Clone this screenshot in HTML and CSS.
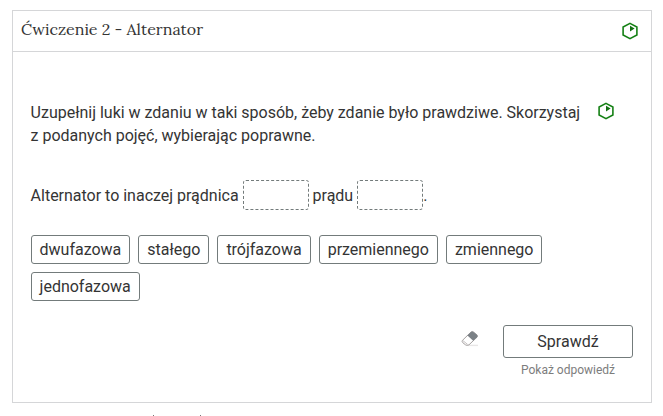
FILE: index.html
```html
<!DOCTYPE html>
<html lang="pl">
<head>
<meta charset="utf-8">
<title>Ćwiczenie 2 - Alternator</title>
<link rel="stylesheet" href="styles.css">
</head>
<body>
<svg class="symbols" width="0" height="0">
  <symbol id="level" viewBox="0 0 18 18">
    <path d="M9 1.4 L15.9 5.1 V12.9 L9 16.6 L2.1 12.9 V5.1 Z" fill="none" stroke="#148014" stroke-width="1.6"/>
    <path d="M9 3.8 L13.6 6.5 L9 9.5 Z" fill="#147014"/>
  </symbol>
</svg>
<main class="exercise">
  <header class="exercise-header">
    <h1 class="title">Ćwiczenie 2 - Alternator</h1>
    <svg class="level"><use href="#level"/></svg>
  </header>
  <section class="exercise-body">
    <div class="instruction">
      <p class="instruction-text">Uzupełnij luki w zdaniu w taki sposób, żeby zdanie było prawdziwe. Skorzystaj<br>z podanych pojęć, wybierając poprawne.</p>
      <svg class="level"><use href="#level"/></svg>
    </div>
    <div class="sentence"><span>Alternator to inaczej prądnica</span><span class="gap"></span><span>prądu</span><span class="gap gap-last"></span><span>.</span></div>
    <div class="choices">
      <span class="choice">dwufazowa</span>
      <span class="choice">stałego</span>
      <span class="choice">trójfazowa</span>
      <span class="choice">przemiennego</span>
      <span class="choice">zmiennego</span>
      <span class="choice">jednofazowa</span>
    </div>
    <div class="actions">
      <svg class="eraser" viewBox="0 0 18 18">
        <path d="M7 15.4 H17" stroke="#e8e6e6" stroke-width="1.4"/>
        <path d="M1.3 10.5 L10 2 Q11.2 1 12.5 2 L16 4.9 Q17 6 16 7.2 L8 14.8 Q6.2 16 4.6 14.9 L1.8 12.7 Q.7 11.7 1.3 10.5 Z" fill="#fff" stroke="#a4a0a0"/>
        <path d="M6.4 5.5 L10 2 Q11.2 1 12.5 2 L16 4.9 Q17 6 16 7.2 L12.2 10.8 Z" fill="#7b8186"/>
        <path d="M2 10.7 L6.7 14.5" stroke="#b5b0b0" stroke-width=".8"/>
      </svg>
      <div class="check">
        <button class="check-button">Sprawdź</button>
        <a class="show-answer">Pokaż odpowiedź</a>
      </div>
    </div>
  </section>
</main>
<footer class="next-edge"><i></i><i></i></footer>
</body>
</html>
```
FILE: styles.css
```css
* { box-sizing: border-box; }
body {
  margin: 0;
  padding: 10px 11px 0 12px;
  height: 416px;
  overflow: hidden;
  background: #fff;
  color: #343434;
  font: 16px/23px Roboto, sans-serif;
  letter-spacing: -.01px;
}
.symbols { display: block; }
.exercise {
  height: 393px;
  border: 1px solid #d5d6d8;
}
.exercise-header {
  display: flex;
  align-items: center;
  justify-content: space-between;
  height: 41px;
  padding: 0 12px 0 8px;
  border-bottom: 1px solid #d5d6d8;
}
.title {
  margin: 0;
  padding-bottom: 4px;
  font: 400 16px/22px Lora, "Liberation Serif", serif;
  letter-spacing: 0;
}
.level { display: block; width: 18px; height: 18px; flex: none; }
.exercise-body { padding: 49px 18px 0 17.6px; }
.instruction { display: flex; gap: 16px; }
.instruction .level { margin-top: 1px; }
.instruction-text { width: 550.4px; margin: 0; white-space: nowrap; }
.sentence {
  display: flex;
  align-items: center;
  height: 30px;
  margin-top: 33px;
}
.sentence span { position: relative; top: 0; }
.gap {
  width: 66px;
  height: 30px;
  margin: 0 4px;
  border: 1px dashed #737b7b;
  border-radius: 3px;
}
.gap-last { margin-right: 0; }
.choices {
  display: flex;
  flex-wrap: wrap;
  gap: 8px;
  margin-top: 25px;
  padding-right: 30px;
}
.choice {
  height: 29px;
  padding: 0 8px;
  border: 1px solid #737b7b;
  border-radius: 3px;
  line-height: 28px;
}
.actions {
  display: flex;
  justify-content: flex-end;
  gap: 24px;
  margin-top: 24px;
}
.eraser { width: 18px; height: 18px; margin-top: 5px; }
.check {
  display: flex;
  flex-direction: column;
  align-items: center;
  width: 130px;
}
.check-button {
  width: 130px;
  height: 33px;
  padding: 0;
  border: 1px solid #737b7b;
  border-radius: 3px;
  background: #fff;
  color: #343434;
  font: 16px/30px Roboto, sans-serif;
}
.show-answer { margin-top: 4px; color: #7d7d7d; font-size: 12px; line-height: 16px; }
.next-edge {
  display: flex;
  gap: 46px;
  margin-top: 12px;
  padding-left: 141px;
}
.next-edge i { width: 1px; height: 1px; background: #777; }
```
